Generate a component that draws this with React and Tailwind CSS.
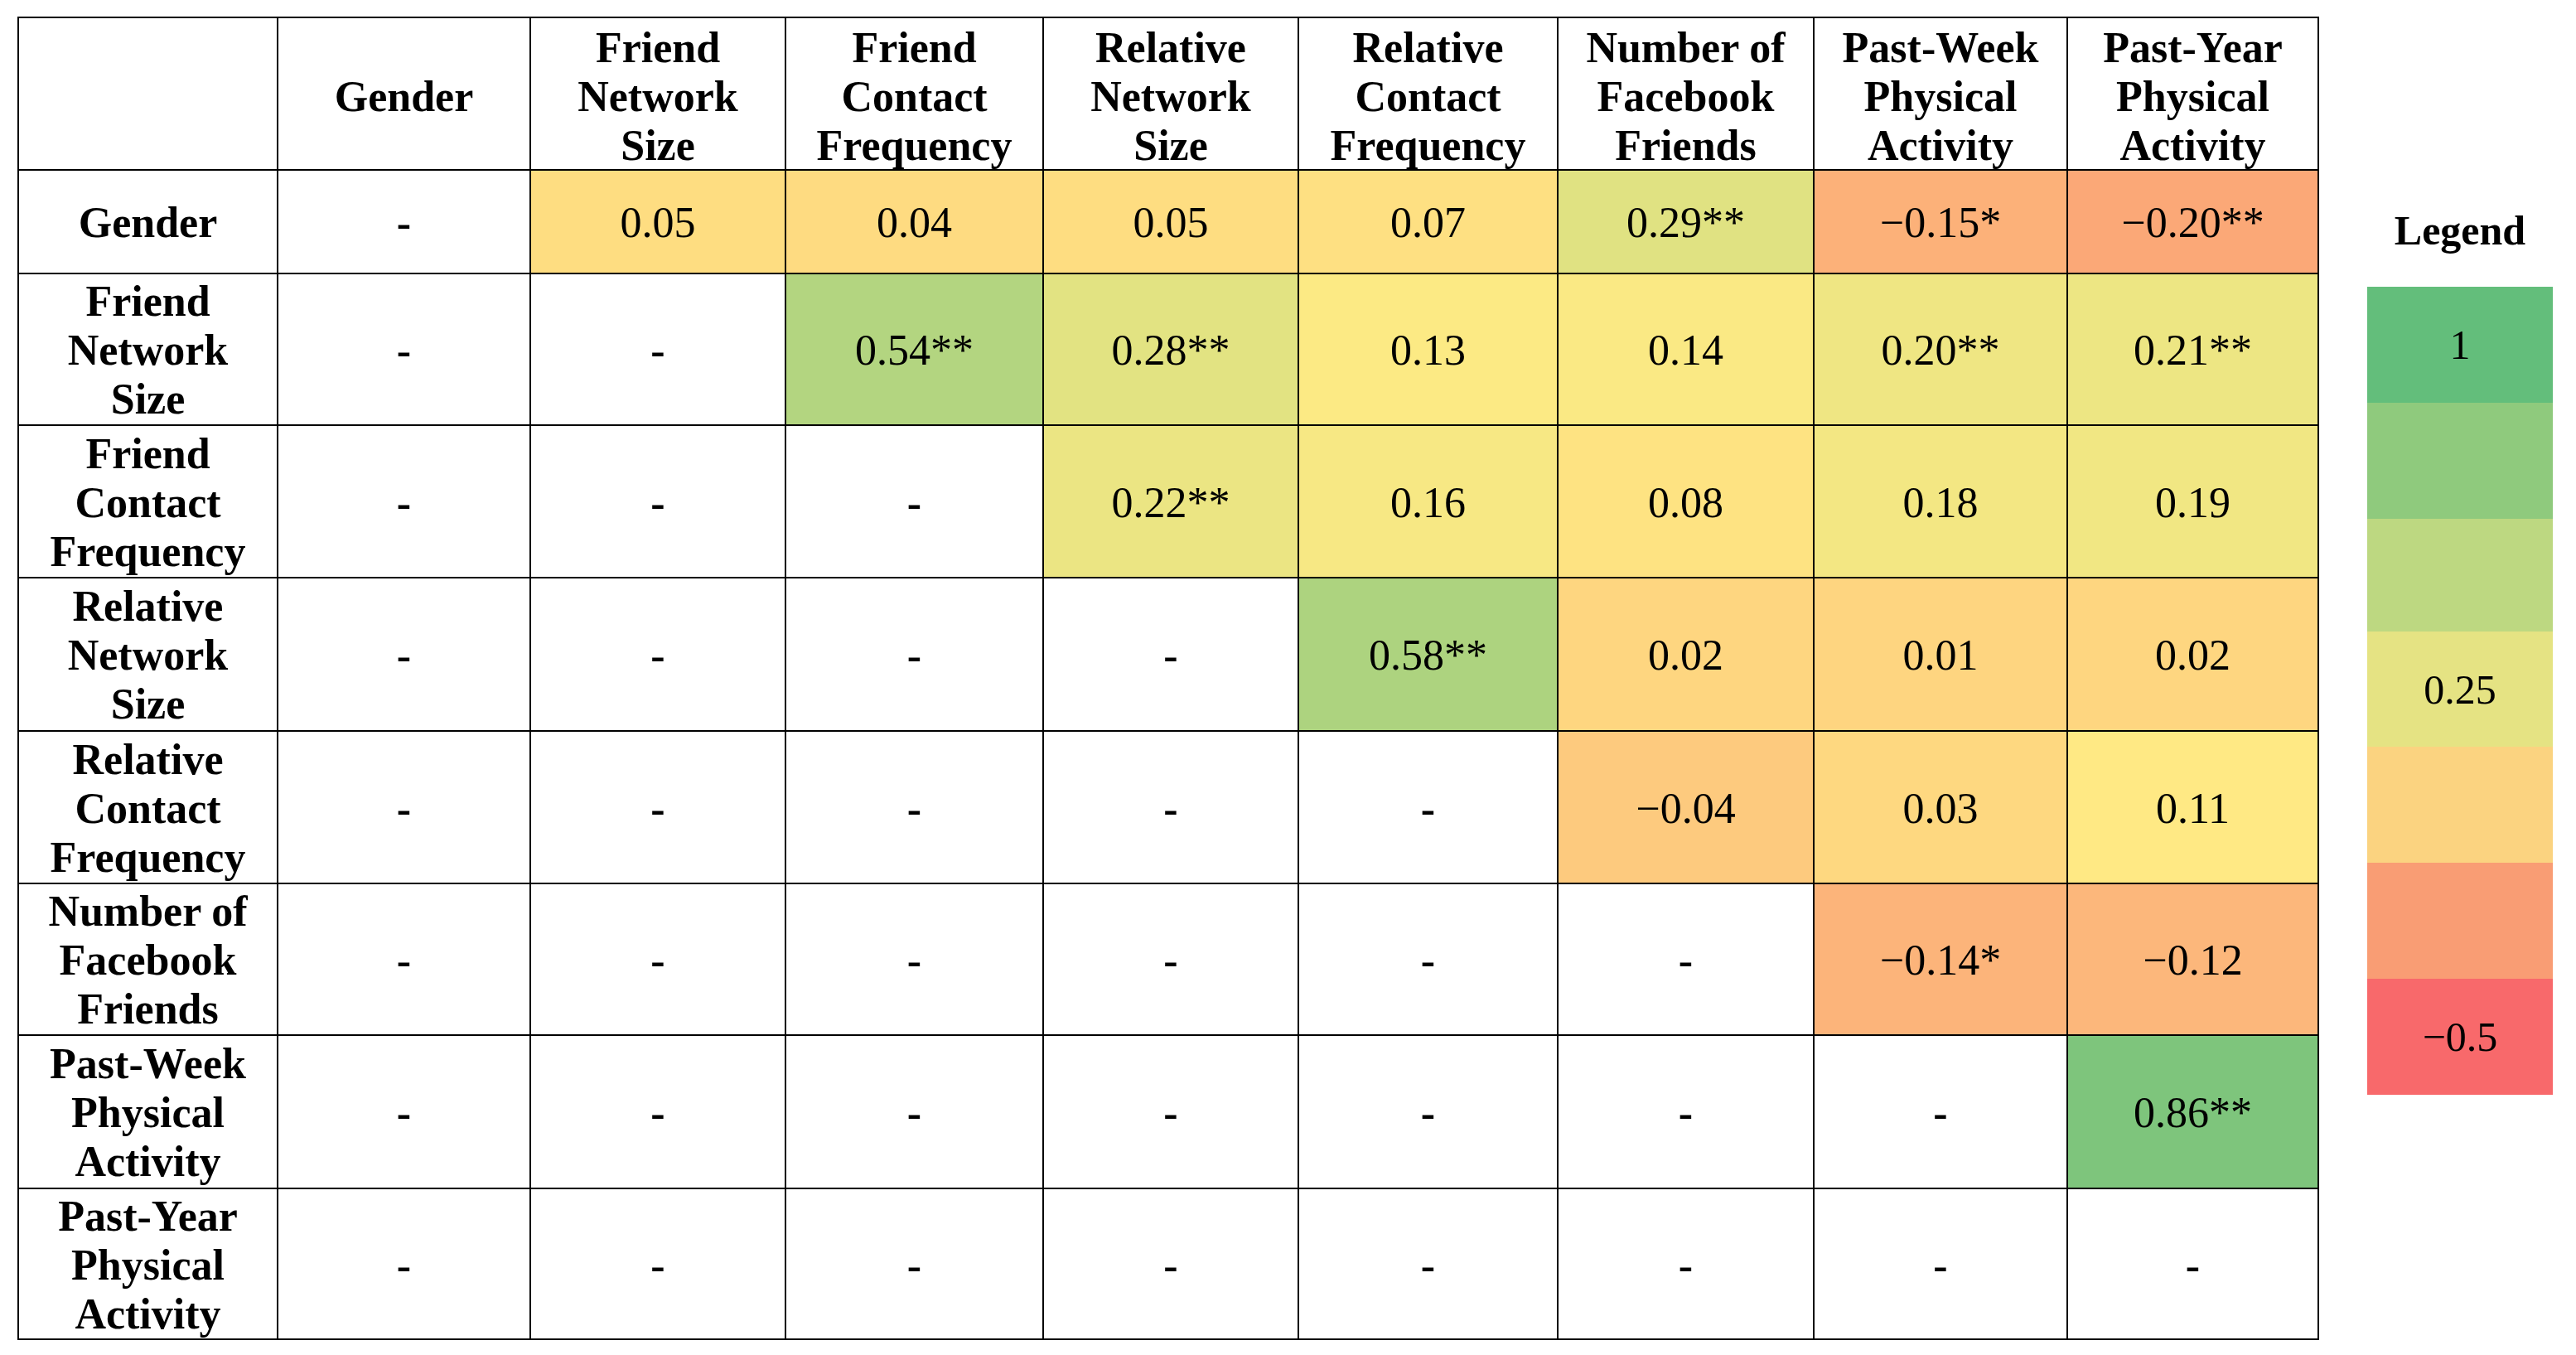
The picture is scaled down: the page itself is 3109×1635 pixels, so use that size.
import React from "react";

const headers = [
  [],
  ["Gender"],
  ["Friend", "Network", "Size"],
  ["Friend", "Contact", "Frequency"],
  ["Relative", "Network", "Size"],
  ["Relative", "Contact", "Frequency"],
  ["Number of", "Facebook", "Friends"],
  ["Past-Week", "Physical", "Activity"],
  ["Past-Year", "Physical", "Activity"],
];

const D = { t: "-", c: "bg-white", b: true };

const rows = [
  {
    label: ["Gender"],
    cells: [
      D,
      { t: "0.05", c: "bg-[#FEDD81]" },
      { t: "0.04", c: "bg-[#FEDB81]" },
      { t: "0.05", c: "bg-[#FEDD81]" },
      { t: "0.07", c: "bg-[#FEE082]" },
      { t: "0.29**", c: "bg-[#E0E282]" },
      { t: "\u22120.15*", c: "bg-[#FCB179]" },
      { t: "\u22120.20**", c: "bg-[#FBA877]" },
    ],
  },
  {
    label: ["Friend", "Network", "Size"],
    cells: [
      D,
      D,
      { t: "0.54**", c: "bg-[#B3D580]" },
      { t: "0.28**", c: "bg-[#E2E382]" },
      { t: "0.13", c: "bg-[#FCEA84]" },
      { t: "0.14", c: "bg-[#FAE984]" },
      { t: "0.20**", c: "bg-[#EFE683]" },
      { t: "0.21**", c: "bg-[#EDE683]" },
    ],
  },
  {
    label: ["Friend", "Contact", "Frequency"],
    cells: [
      D,
      D,
      D,
      { t: "0.22**", c: "bg-[#EBE583]" },
      { t: "0.16", c: "bg-[#F7E884]" },
      { t: "0.08", c: "bg-[#FEE382]" },
      { t: "0.18", c: "bg-[#F3E783]" },
      { t: "0.19", c: "bg-[#F1E783]" },
    ],
  },
  {
    label: ["Relative", "Network", "Size"],
    cells: [
      D,
      D,
      D,
      D,
      { t: "0.58**", c: "bg-[#ADD37F]" },
      { t: "0.02", c: "bg-[#FED680]" },
      { t: "0.01", c: "bg-[#FED580]" },
      { t: "0.02", c: "bg-[#FED680]" },
    ],
  },
  {
    label: ["Relative", "Contact", "Frequency"],
    cells: [
      D,
      D,
      D,
      D,
      D,
      { t: "\u22120.04", c: "bg-[#FDCA7E]" },
      { t: "0.03", c: "bg-[#FED880]" },
      { t: "0.11", c: "bg-[#FFE984]" },
    ],
  },
  {
    label: ["Number of", "Facebook", "Friends"],
    cells: [
      D,
      D,
      D,
      D,
      D,
      D,
      { t: "\u22120.14*", c: "bg-[#FCB47A]" },
      { t: "\u22120.12", c: "bg-[#FCB77B]" },
    ],
  },
  {
    label: ["Past-Week", "Physical", "Activity"],
    cells: [D, D, D, D, D, D, D, { t: "0.86**", c: "bg-[#7EC57C]" }],
  },
  {
    label: ["Past-Year", "Physical", "Activity"],
    cells: [D, D, D, D, D, D, D, D],
  },
];

const legend = [
  { c: "bg-[#63BE7B]", h: "h-[140px]", t: "1" },
  { c: "bg-[#8FCA7D]", h: "h-[140px]", t: "" },
  { c: "bg-[#BDD881]", h: "h-[136px]", t: "" },
  { c: "bg-[#E5E383]", h: "h-[139px]", t: "0.25" },
  { c: "bg-[#FBD380]", h: "h-[140px]", t: "" },
  { c: "bg-[#F99D74]", h: "h-[140px]", t: "" },
  { c: "bg-[#F8696B]", h: "h-[140px]", t: "\u22120.5" },
];

function Lines({ lines }) {
  return (
    <div className="text-center font-bold leading-[59px] whitespace-nowrap">
      {lines.map((l, i) => (
        <div key={i}>{l}</div>
      ))}
    </div>
  );
}

export default function App() {
  return (
    <div className="min-h-screen w-full bg-white text-black flex items-start pt-[20px] pl-[21px] font-['Liberation_Serif','Times_New_Roman',serif]">
      <div className="grid bg-black gap-[2px] p-[2px] grid-cols-[311px_303px_306px_309px_306px_311px_307px_304px_301px] grid-rows-[182px_123px_181px_182px_183px_182px_181px_183px_180px] text-[52px]">
        {headers.map((h, i) => (
          <div key={"h" + i} className="bg-white flex items-center justify-center pt-[6px]">
            <Lines lines={h} />
          </div>
        ))}
        {rows.map((r, ri) => (
          <React.Fragment key={"r" + ri}>
            <div className="bg-white flex items-center justify-center pt-[2px]">
              <Lines lines={r.label} />
            </div>
            {r.cells.map((c, ci) => (
              <div
                key={ci}
                className={
                  c.c +
                  " flex items-center justify-center pt-[2px] leading-[59px] whitespace-nowrap " +
                  (c.b ? "font-bold" : "font-normal")
                }
              >
                {c.t}
              </div>
            ))}
          </React.Fragment>
        ))}
      </div>
      <div className="ml-[58px] mt-[228px] w-[224px] flex flex-col">
        <div className="text-[50px] font-bold leading-[60px] text-center">Legend</div>
        <div className="mt-[38px] flex flex-col">
          {legend.map((l, i) => (
            <div
              key={i}
              className={l.c + " " + l.h + " flex items-center justify-center text-[50px] leading-[60px]"}
            >
              {l.t}
            </div>
          ))}
        </div>
      </div>
    </div>
  );
}
